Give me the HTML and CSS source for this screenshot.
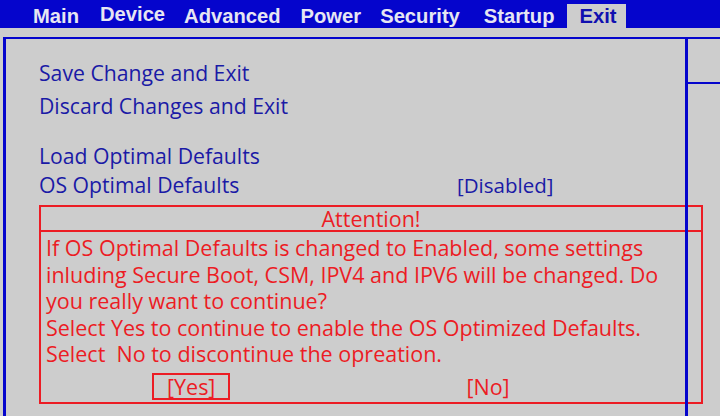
FILE: index.html
```html
<!DOCTYPE html>
<html>
<head>
<meta charset="utf-8">
<link rel="stylesheet" href="styles.css">
</head>
<body>
<div class="screen">
  <div class="menubar">
    <span class="tab t-main">Main</span>
    <span class="tab t-device">Device</span>
    <span class="tab t-adv">Advanced</span>
    <span class="tab t-power">Power</span>
    <span class="tab t-sec">Security</span>
    <span class="tab t-start">Startup</span>
    <span class="tab active">Exit</span>
  </div>
  <div class="frame">
    <div class="main">
      <div class="item i-save">Save Change and Exit</div>
      <div class="item i-discard">Discard Changes and Exit</div>
      <div class="item i-load">Load Optimal Defaults</div>
      <div class="item i-os"><span class="label">OS Optimal Defaults</span><span class="value">[Disabled]</span></div>
      <div class="dialog">
        <div class="dlg-title">Attention!</div>
        <div class="dlg-body">
          <div class="dlg-line">If OS Optimal Defaults is changed to Enabled, some settings</div>
          <div class="dlg-line">inluding Secure Boot, CSM, IPV4 and IPV6 will be changed. Do</div>
          <div class="dlg-line">you really want to continue?</div>
          <div class="dlg-line">Select Yes to continue to enable the OS Optimized Defaults.</div>
          <div class="dlg-line">Select &nbsp;No to discontinue the opreation.</div>
        </div>
        <div class="dlg-buttons">
          <span class="btn btn-yes">[Yes]</span>
          <span class="btn btn-no">[No]</span>
        </div>
      </div>
    </div>
    <div class="side">
      <div class="side-top"></div>
    </div>
  </div>
</div>
</body>
</html>
```

FILE: styles.css
```css
html, body {
  margin: 0;
  padding: 0;
}
body {
  background: #cdcdcd;
  width: 720px;
  height: 416px;
  overflow: hidden;
}
.screen {
  width: 720px;
  height: 416px;
  display: flex;
  flex-direction: column;
}
.menubar {
  height: 28px;
  background: #0505cc;
  display: flex;
  align-items: flex-end;
  font-family: "Liberation Sans", Arial, sans-serif;
  font-weight: bold;
  font-size: 20.2px;
  color: #e6e6f2;
  padding-left: 33px;
  flex: none;
}
.tab {
  line-height: 24px;
  height: 24px;
}
.t-main { margin-right: 21px; }
.t-device { position: relative; top: -2px; margin-right: 19px; }
.t-adv { margin-right: 20px; }
.t-power { margin-right: 19px; }
.t-sec { margin-right: 24px; }
.t-start { margin-right: 12px; }
.tab.active {
  background: #cdcdcd;
  color: #1010b0;
  padding: 0 9px 0 13px;
}
.frame {
  margin-top: 9px;
  margin-left: 3px;
  border-top: 2px solid #0505cc;
  border-left: 3px solid #0505cc;
  flex: 1;
  display: flex;
}
.main {
  width: 679px;
  flex: none;
  padding-left: 33px;
  padding-top: 21px;
  box-sizing: border-box;
  font-family: "Open Sans", "Noto Sans", sans-serif;
  font-size: 21.2px;
  color: #1a1aa6;
}
.item {
  line-height: 26px;
  height: 26px;
  white-space: nowrap;
}
.i-discard { margin-top: 7px; }
.i-load { margin-top: 24px; }
.i-os { margin-top: 3px; display: flex; }
.label { width: 418px; flex: none; }
.value { font-size: 20.5px; }
.side {
  flex: 1;
  border-left: 3px solid #0505cc;
  position: relative;
  z-index: 1;
}
.side-top {
  height: 43px;
  border-bottom: 2px solid #0505cc;
}
.dialog {
  margin-top: 7px;
  width: 664px;
  box-sizing: border-box;
  border: 2px solid #ec1c24;
  color: #ec1c24;
  font-size: 21.5px;
}
.dlg-title {
  height: 23px;
  line-height: 23px;
  text-align: center;
  border-bottom: 2px solid #ec1c24;
}
.dlg-body {
  padding: 3px 0 0 5px;
}
.dlg-line {
  line-height: 26.5px;
  height: 26.5px;
  white-space: nowrap;
}
.dlg-buttons {
  display: flex;
  align-items: center;
  padding: 5px 0 2px 111px;
}
.btn {
  line-height: 23px;
  height: 23px;
}
.btn-yes {
  border: 2px solid #ec1c24;
  padding: 0 13px;
}
.btn-no {
  margin-left: 236px;
}
```
